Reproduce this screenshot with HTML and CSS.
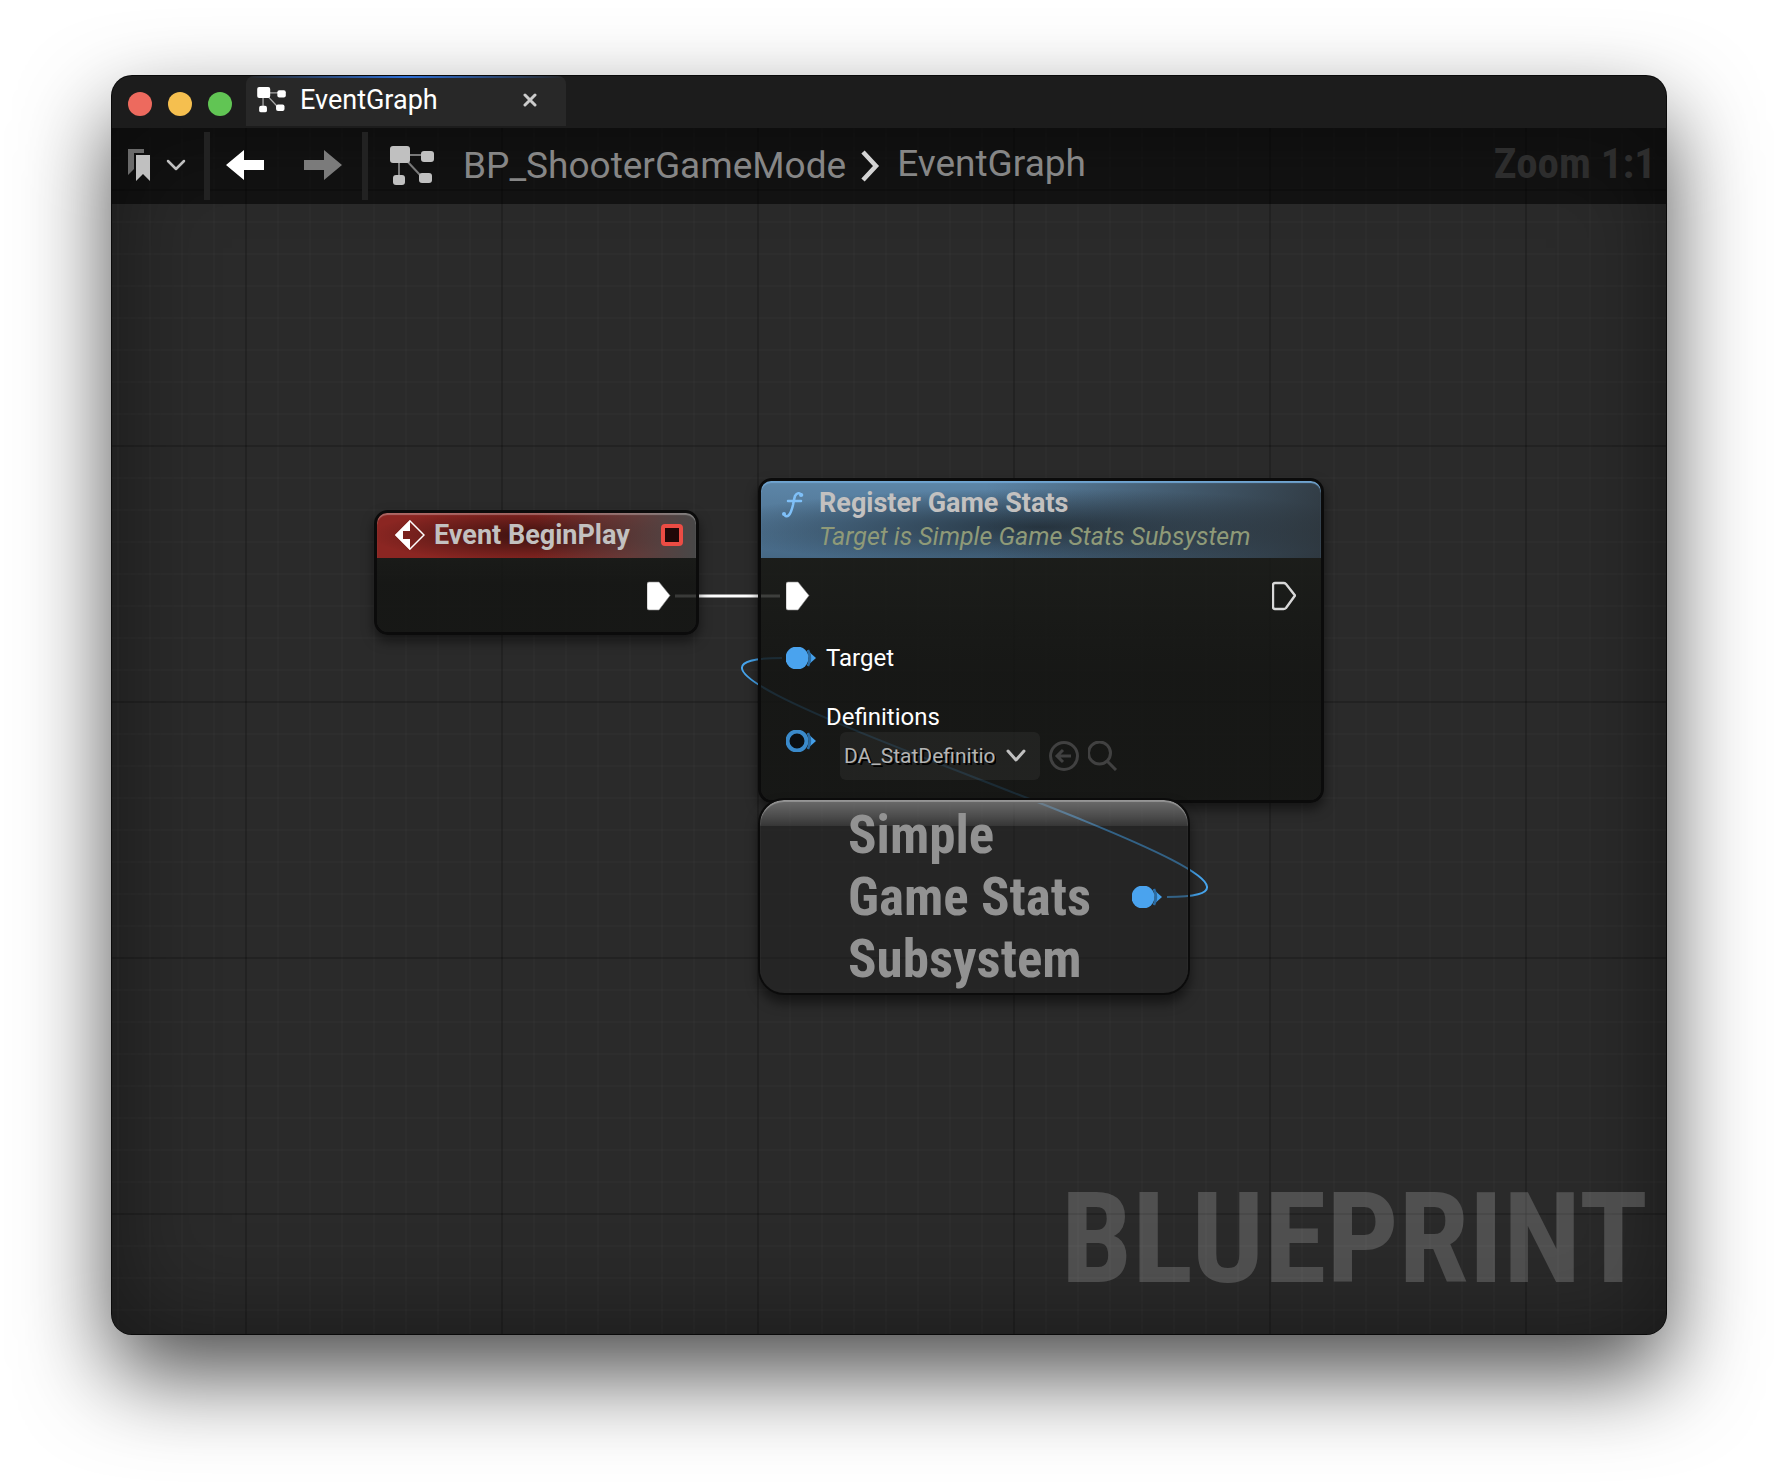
FILE: index.html
```html
<!DOCTYPE html>
<html lang="en">
<head>
<meta charset="utf-8">
<title>EventGraph</title>
<link rel="stylesheet" href="styles.css">
</head>
<body>
<svg class="defs" width="0" height="0" aria-hidden="true">
  <symbol id="graph-icon" viewBox="0 0 44 40">
    <path d="M18 9H32M9 16V30M16 14L31 30" stroke="currentColor" stroke-width="2" opacity=".6" fill="none"/>
    <rect x="0" y="0" width="20" height="17" rx="3"/>
    <rect x="31" y="5" width="13" height="11" rx="3"/>
    <rect x="29" y="27" width="13" height="10" rx="3"/>
    <rect x="3" y="29" width="12" height="10" rx="3"/>
  </symbol>
  <symbol id="exec-on" viewBox="0 0 24 30">
    <path d="M2 1H12L23 14.500L12 29H2Q0 29 0 27V3Q0 1 2 1Z" fill="#fff" stroke="#888" stroke-width=".6"/>
  </symbol>
  <symbol id="exec-off" viewBox="0 0 24 30">
    <path d="M3 2H11.500Q13 2 14 3L23 14.500L14 27Q13 28 11.500 28H3Q1 28 1 26V4Q1 2 3 2Z" fill="none" stroke="#d8d8d8" stroke-width="2.400"/>
  </symbol>
  <symbol id="pin-on" viewBox="0 0 30 22">
    <path d="M21 3Q25 11 21 19L30 11Z" fill="#45a0ea"/>
    <path d="M22 3Q26 11 22 19" stroke="#2a6ba3" stroke-width="2.500" fill="none"/>
    <circle cx="11" cy="11" r="11.500" fill="#4aa3ee"/>
  </symbol>
  <symbol id="pin-off" viewBox="0 0 30 22">
    <path d="M21 3Q25 11 21 19L30 11Z" fill="#45a0ea"/>
    <path d="M22 3Q26 11 22 19" stroke="#2a6ba3" stroke-width="2.500" fill="none"/>
    <circle cx="11" cy="11" r="9.500" fill="#0b0f12" stroke="#3a8acb" stroke-width="4"/>
  </symbol>
</svg>
<div class="window">
  <header class="titlebar">
    <div class="lights">
      <button class="light close" aria-label="Close window"></button>
      <button class="light minimize" aria-label="Minimize window"></button>
      <button class="light maximize" aria-label="Zoom window"></button>
    </div>
    <div class="tab">
      <svg class="tab-icon" width="29" height="26"><use href="#graph-icon"/></svg>
      <span class="tab-title">EventGraph</span>
      <button class="tab-close" aria-label="Close tab">
        <svg width="14" height="14" viewBox="0 0 14 14"><path d="M2 2L12 12M12 2L2 12" stroke="#ccc" stroke-width="3" stroke-linecap="round"/></svg>
      </button>
    </div>
  </header>
  <main class="graph">
    <nav class="toolbar">
      <button class="bookmarks" aria-label="Bookmarks">
        <svg width="58" height="34" viewBox="0 0 58 34">
          <path d="M0 1H16V5H6V21L0 27Z" fill="#6a6a6a"/>
          <path d="M8 7H22V33L15 26L8 33Z" fill="#c0c0c0"/>
          <path d="M40 13L48 21L56 13" fill="none" stroke="#c0c0c0" stroke-width="2.500" stroke-linecap="round" stroke-linejoin="round"/>
        </svg>
      </button>
      <span class="divider"></span>
      <button class="nav" aria-label="Back">
        <svg width="38" height="30" viewBox="0 0 38 30"><path d="M0 15L18 0V10H38V20H18V30Z" fill="#fff"/></svg>
      </button>
      <button class="nav" aria-label="Forward">
        <svg width="38" height="30" viewBox="0 0 38 30"><path d="M38 15L20 0V10H0V20H20V30Z" fill="#7b7b7b"/></svg>
      </button>
      <span class="divider"></span>
      <svg class="crumb-icon" width="44" height="40"><use href="#graph-icon"/></svg>
      <a class="crumb" href="#">BP_ShooterGameMode</a>
      <svg class="crumb-arrow" width="20" height="32" viewBox="0 0 20 32"><path d="M3 2L16 16L3 30" fill="none" stroke="#d4d4d4" stroke-width="4.500"/></svg>
      <a class="crumb current" href="#">EventGraph</a>
      <span class="zoom">Zoom 1:1</span>
    </nav>
    <div class="canvas">
      <svg class="wires" width="1200" height="900" viewBox="0 0 1200 900">
        <path d="M563 392H668" stroke="#fff" stroke-width="3"/>
        <path d="M1055 693C1285 693 440 454 670 454" fill="none" stroke="#46a4ec" stroke-width="2"/>
      </svg>

      <section class="node event">
        <h2 class="node-head">
          <svg width="30" height="30" viewBox="0 0 30 30"><path d="M15 1L29 15L15 29L1 15Z" fill="none" stroke="#fff" stroke-width="1.500"/><path d="M15 0V11H8V19H15V30L0 15Z" fill="#fff"/></svg>
          <span class="node-title">Event BeginPlay</span>
          <svg class="delegate" width="22" height="22" viewBox="0 0 22 22"><rect x="2" y="2" width="18" height="18" rx="2" fill="#200808" stroke="#ec4c44" stroke-width="4"/></svg>
        </h2>
        <div class="pins"><svg class="pin-right" width="24" height="30"><use href="#exec-on"/></svg></div>
      </section>

      <section class="node register">
        <h2 class="node-head">
          <svg class="func" width="22" height="26" viewBox="0 0 22 26"><path d="M20 3Q16-1 13 4Q12 7 11 13Q9 21 7 23Q4 26 2 22M6 9H19" fill="none" stroke="#7fc0f8" stroke-width="2.500" stroke-linecap="round"/><circle cx="19" cy="3" r="2" fill="#7fc0f8"/><circle cx="2" cy="22" r="2" fill="#7fc0f8"/></svg>
          <span class="titles">
            <span class="node-title">Register Game Stats</span>
            <span class="subtitle">Target is Simple Game Stats Subsystem</span>
          </span>
        </h2>
        <div class="pins">
          <svg width="24" height="30"><use href="#exec-on"/></svg>
          <svg class="pin-right" width="24" height="30"><use href="#exec-off"/></svg>
        </div>
        <div class="pins target">
          <svg width="30" height="22"><use href="#pin-on"/></svg>
          <span class="pin-label">Target</span>
        </div>
        <div class="pins definitions">
          <svg width="30" height="22"><use href="#pin-off"/></svg>
          <div class="field">
            <label class="pin-label" for="definitions">Definitions</label>
            <div class="field-row">
              <div class="picker">
                <select id="definitions"><option>DA_StatDefinitions</option></select>
                <svg class="picker-arrow" width="20" height="14" viewBox="0 0 20 14"><path d="M2 2L10 11L18 2" fill="none" stroke="#c0c0c0" stroke-width="3" stroke-linecap="round" stroke-linejoin="round"/></svg>
              </div>
              <button class="tool" aria-label="Use selected asset">
                <svg width="30" height="30" viewBox="0 0 30 30"><circle cx="15" cy="15" r="13.500"/><path d="M22 15H9M14 9L8 15L14 21"/></svg>
              </button>
              <button class="tool" aria-label="Browse to asset">
                <svg width="30" height="30" viewBox="0 0 30 30"><circle cx="11.500" cy="12" r="11"/><path d="M19 20L28 29"/></svg>
              </button>
            </div>
          </div>
        </div>
      </section>

      <section class="node subsystem">
        <h2 class="compact-title">Simple<br>Game Stats<br>Subsystem</h2>
        <svg width="30" height="22"><use href="#pin-on"/></svg>
      </section>
    </div>
    <div class="watermark">BLUEPRINT</div>
  </main>
</div>
</body>
</html>
```
FILE: styles.css
```css
* { box-sizing: border-box; }
body {
  margin: 0;
  min-height: 100vh;
  padding: 76px 112px 148px;
  display: flex;
  background: #fff;
  color: #fff;
  font-family: Roboto, "Liberation Sans", sans-serif;
}
button { padding: 0; border: 0; background: none; font: inherit; }
svg { display: block; flex: none; fill: currentColor; }
h2 { margin: 0; font-weight: 700; }
.defs { position: absolute; }

.window {
  flex: 1;
  display: flex;
  flex-direction: column;
  overflow: hidden;
  border-radius: 20px;
  background: #1c1c1c;
  box-shadow: 0 0 0 1px #0a0a0a, 0 40px 90px rgba(0, 0, 0, .7);
}

.titlebar { display: flex; height: 52px; }
.lights { display: flex; gap: 16px; padding: 16px 14px 0 16px; }
.light { width: 24px; height: 24px; border-radius: 50%; }
.close { background: #ed6a5e; }
.minimize { background: #f5bf4f; }
.maximize { background: #61c554; }
.tab {
  display: flex;
  align-items: center;
  width: 320px;
  height: 50px;
  padding: 0 29px 2px 11px;
  border-radius: 8px 8px 0 0;
  background: linear-gradient(90deg, transparent, #2d6fd8, transparent) top / 100% 2px no-repeat, #282828;
}
.tab-title { margin-left: 14px; font-size: 27px; line-height: 32px; }
.tab-close { margin-left: auto; }

.graph {
  position: relative;
  flex: 1;
  display: flex;
  flex-direction: column;
  background:
    linear-gradient(90deg, rgba(0, 0, 0, .25) 2px, transparent 2px) 133px 61px / 256px 256px,
    linear-gradient(rgba(0, 0, 0, .25) 2px, transparent 2px) 133px 61px / 256px 256px,
    linear-gradient(90deg, rgba(255, 255, 255, .014) 2px, transparent 2px) 133px 61px / 32px 32px,
    linear-gradient(rgba(255, 255, 255, .014) 2px, transparent 2px) 133px 61px / 32px 32px,
    #2a2a2a;
}
.graph::before {
  content: "";
  position: absolute;
  inset: 0;
  box-shadow: inset 0 0 100px rgba(0, 0, 0, .45);
}
.toolbar {
  position: relative;
  display: flex;
  align-items: center;
  height: 76px;
  padding: 0 10px 0 16px;
  background: rgba(0, 0, 0, .55);
}
.bookmarks { width: 76px; padding-bottom: 2px; }
.divider { width: 6px; height: 68px; background: #222; }
.nav { margin-left: 16px; margin-right: 24px; padding-bottom: 2px; }
.nav + .nav { margin-right: 20px; }
.crumb-icon { margin-left: 22px; color: #c0c0c0; }
.crumb { margin-left: 29px; color: #868686; font-size: 37px; line-height: 40px; text-decoration: none; }
.crumb-arrow { margin-left: 14px; }
.current { margin-left: 17px; padding-bottom: 4px; }
.zoom {
  margin-left: auto;
  padding-bottom: 6px;
  color: #2d2d2d;
  font: 700 43px/48px "Roboto Condensed", "Liberation Sans Narrow", Roboto, sans-serif;
}

.canvas { position: relative; flex: 1; }
.wires { position: absolute; left: 0; top: 0; }
.watermark {
  position: absolute;
  right: 18px;
  bottom: 31px;
  color: rgba(255, 255, 255, .18);
  font: 700 127px/128px "Roboto Condensed", "Liberation Sans Narrow", Roboto, sans-serif;
}

.node {
  position: absolute;
  border: 3px solid #0b0b0b;
  border-radius: 14px;
  background: linear-gradient(rgba(28, 30, 26, .82), rgba(19, 20, 18, .84) 60%);
  background-clip: padding-box;
  box-shadow: 0 6px 12px rgba(0, 0, 0, .5);
}
.node-head { display: flex; border-radius: 10px 10px 0 0; color: #c3c1c0; }
.node-title { font-size: 27px; line-height: 32px; }
.pins { display: flex; align-items: center; }
.pin-right { margin-left: auto; }

.event { left: 262px; top: 306px; width: 325px; height: 125px; }
.event .node-head {
  align-items: center;
  height: 45px;
  gap: 9px;
  padding: 0 13px 2px 18px;
  background:
    linear-gradient(90deg, transparent 50%, #484848),
    radial-gradient(ellipse 50% 60% at 48% 50%, #3c1210, transparent),
    #8b2622;
  box-shadow: inset 0 2px 1px rgba(255, 255, 255, .3);
}
.delegate { margin-left: auto; }
.event .pins { padding: 23px 25px 0 0; }

.register { left: 646px; top: 274px; width: 566px; height: 325px; }
.register .node-head {
  height: 77px;
  padding: 6px 20px;
  gap: 15px;
  background:
    linear-gradient(90deg, transparent 40%, rgba(40, 44, 47, .8)),
    radial-gradient(ellipse 60% 50% at 50% 60%, #263541, transparent),
    linear-gradient(#5d86a8, #466885);
  box-shadow: inset 0 2px 1px #6fa4d0;
}
.func { margin-top: 5px; margin-left: 1px; }
.titles { display: flex; flex-direction: column; }
.subtitle { color: #8f9a78; font-size: 25px; line-height: 36px; font-weight: 400; font-style: italic; }
.register .pins { padding: 23px 25px 0; }
.register .target { padding-top: 32px; gap: 10px; }
.pin-label { font-size: 24px; line-height: 30px; }
.register .definitions { padding-top: 29px; gap: 10px; }
.field { display: flex; flex-direction: column; }
.field-row { display: flex; align-items: center; gap: 9px; padding-left: 14px; }
.picker { display: grid; width: 200px; height: 48px; border-radius: 6px; background: rgba(255, 255, 255, .05); }
.picker > * { grid-area: 1 / 1; }
.picker select {
  appearance: none;
  width: 156px;
  padding: 0 0 0 4px;
  border: 0;
  background: none;
  color: #b4b4b4;
  font: 21px/28px Roboto, sans-serif;
  text-shadow: 2px 2px 0 #000;
}
.picker-arrow { place-self: center end; margin-right: 14px; }
.tool svg { fill: none; stroke: #414141; stroke-width: 3px; }

.subsystem {
  left: 646px;
  top: 594px;
  display: flex;
  align-items: center;
  justify-content: space-between;
  width: 432px;
  height: 197px;
  padding: 0 26px 0 88px;
  border-width: 2px;
  border-radius: 26px;
  background:
    linear-gradient(rgba(255, 255, 255, .36), rgba(255, 255, 255, .08)) top / 100% 26px no-repeat,
    rgba(32, 32, 32, .5);
  background-clip: padding-box;
  box-shadow: 0 8px 12px rgba(0, 0, 0, .5), inset 0 2px 1px rgba(255, 255, 255, .3);
}
.compact-title {
  color: #929292;
  font: 700 53px/62px "Roboto Condensed", "Liberation Sans Narrow", Roboto, sans-serif;
}
```
